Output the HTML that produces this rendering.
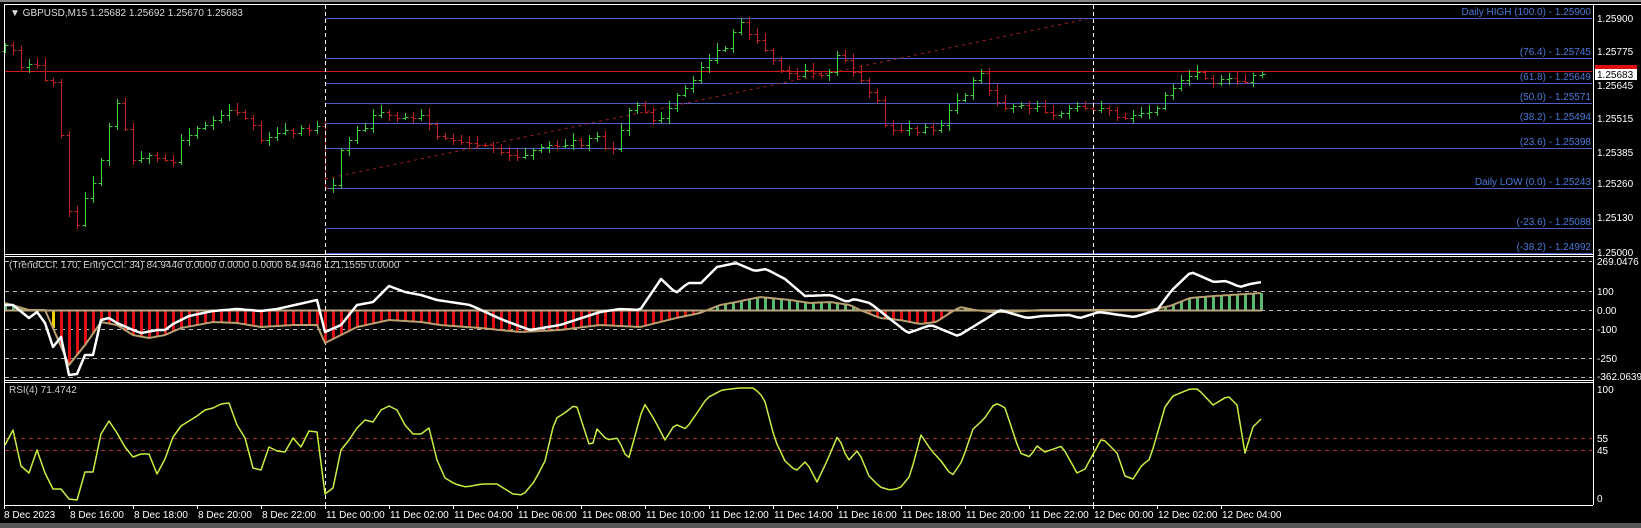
<!DOCTYPE html>
<html><head><meta charset="utf-8"><style>
html,body{margin:0;padding:0;background:#000;width:1641px;height:528px;overflow:hidden}
svg{display:block}
text{font-family:"Liberation Sans",sans-serif;font-size:10px}
</style></head><body>
<svg id="s" width="1641" height="528" viewBox="0 0 1641 528" xmlns="http://www.w3.org/2000/svg">
<rect width="1641" height="528" fill="#000"/>
<rect x="0" y="0" width="1641" height="2" fill="#888"/>
<rect x="0" y="523" width="1641" height="5" fill="#555"/>
<g id="g"></g>
<g stroke="#fff" fill="none" stroke-width="1">
<line x1="4.5" y1="4" x2="4.5" y2="505"/>
<line x1="4" y1="4.5" x2="1641" y2="4.5"/>
<line x1="1593.5" y1="4" x2="1593.5" y2="505"/>
<line x1="4" y1="254.5" x2="1593" y2="254.5"/>
<line x1="4" y1="256.5" x2="1593" y2="256.5"/>
<line x1="4" y1="380.5" x2="1593" y2="380.5"/>
<line x1="4" y1="382.5" x2="1593" y2="382.5"/>
<line x1="4" y1="505.5" x2="1593" y2="505.5"/>
</g>
<text x="10" y="16" fill="#ddd" font-size="10.5">▼ GBPUSD,M15  1.25682 1.25692 1.25670 1.25683</text>
<text x="9" y="268" fill="#ccc">(TrendCCI: 170, EntryCCI: 34)  84.9446 0.0000 0.0000 0.0000 84.9446 121.1555 0.0000</text>
<text x="9" y="393" fill="#ccc">RSI(4) 71.4742</text>
<g fill="#fff" font-size="10.5">
<text x="1597" y="22">1.25900</text>
<text x="1597" y="55">1.25775</text>
<text x="1597" y="89">1.25645</text>
<text x="1597" y="122">1.25515</text>
<text x="1597" y="156">1.25385</text>
<text x="1597" y="187">1.25260</text>
<text x="1597" y="221">1.25130</text>
<text x="1597" y="256">1.25000</text>
<text x="1597" y="265" font-size="9.5">269.0476</text>
<text x="1597" y="295">100</text>
<text x="1597" y="314">0.00</text>
<text x="1597" y="333">-100</text>
<text x="1597" y="362">-250</text>
<text x="1597" y="380" font-size="9.5">-362.0639</text>
<text x="1597" y="393">100</text>
<text x="1597" y="442">55</text>
<text x="1597" y="454">45</text>
<text x="1597" y="502">0</text>
</g>
<rect x="1595" y="65" width="42" height="6" fill="#e01010"/>
<rect x="1595" y="69" width="42" height="11" fill="#fff"/>
<text x="1597" y="78" fill="#000" font-size="10.5">1.25683</text>
</svg>
<script>
var g=document.getElementById('g');var h='';
function L(x1,y1,x2,y2,c,w,d){h+='<line x1="'+x1+'" y1="'+y1+'" x2="'+x2+'" y2="'+y2+'" stroke="'+c+'" stroke-width="'+(w||1)+'"'+(d?' stroke-dasharray="'+d+'"':'')+'/>';}
function T(x,y,t,c,a){h+='<text x="'+x+'" y="'+y+'" fill="'+c+'"'+(a?' text-anchor="end"':'')+'>'+t+'</text>';}
function interp(a,x){for(var i=0;i<a.length-1;i++){if(x<=a[i+1][0]){var t=(x-a[i][0])/(a[i+1][0]-a[i][0]);return a[i][1]+t*(a[i+1][1]-a[i][1]);}}return a[a.length-1][1];}
var fib=[[18,'Daily HIGH (100.0) -  1.25900'],[58,'(76.4) -  1.25745'],[83,'(61.8) -  1.25649'],[103,'(50.0) -  1.25571'],[123,'(38.2) -  1.25494'],[148,'(23.6) -  1.25398'],[188,'Daily LOW (0.0) -  1.25243'],[228,'(-23.6) -  1.25088'],[253,'(-38.2) -  1.24992']];
fib.forEach(function(f){L(325,f[0]+.5,1592,f[0]+.5,'#4d5fc0');T(1591,f[0]-3,f[1],'#4a78d8',1);});
L(5,71.5,1592,71.5,'#d01818');
L(325,179,1087,19,'#a02020',1,'3,4');
[261,291,310,329,358,377].forEach(function(y){L(5,y+.5,1592,y+.5,'#bbb',1,'4,4');});
L(5,438.5,1592,438.5,'#b03030',1,'4,4');L(5,450.5,1592,450.5,'#b03030',1,'4,4');
var C=[[5,45],[13,50],[21,67],[29,64],[37,65],[45,80],[53,82],[61,135],[69,211],[77,225],[85,198],[93,183],[101,160],[109,126],[117,103],[125,129],[133,160],[141,158],[149,155],[157,158],[165,160],[173,162],[181,140],[189,135],[197,128],[205,125],[213,120],[221,115],[229,110],[237,112],[245,118],[253,125],[261,140],[269,137],[277,133],[285,130],[293,133],[301,128],[309,130],[317,126],[325,188],[333,185],[341,150],[349,140],[357,130],[365,128],[373,115],[381,112],[389,115],[397,118],[405,117],[413,118],[421,115],[429,124],[437,136],[445,138],[453,140],[461,142],[469,143],[477,145],[485,145],[493,148],[501,152],[509,155],[517,157],[525,155],[533,150],[541,147],[549,145],[557,146],[565,145],[573,140],[581,145],[589,138],[597,136],[605,148],[613,149],[621,130],[629,110],[637,105],[645,112],[653,120],[661,118],[669,108],[677,95],[685,88],[693,80],[701,67],[709,60],[717,50],[725,48],[733,32],[741,22],[749,34],[757,40],[765,50],[773,60],[781,70],[789,73],[797,76],[805,70],[813,73],[821,75],[829,72],[837,55],[845,60],[853,72],[861,80],[869,92],[877,100],[885,125],[893,130],[901,130],[909,128],[917,132],[925,127],[933,130],[941,125],[949,110],[957,100],[965,95],[973,80],[981,73],[989,90],[997,102],[1005,108],[1013,106],[1021,105],[1029,108],[1037,106],[1045,112],[1053,115],[1061,113],[1069,108],[1077,106],[1085,108],[1093,110],[1101,108],[1109,110],[1117,117],[1125,118],[1133,115],[1141,113],[1149,112],[1157,108],[1165,95],[1173,88],[1181,80],[1189,76],[1197,72],[1205,78],[1213,83],[1221,79],[1229,78],[1237,81],[1245,82],[1253,75],[1262,74]];
var prev=C[0][1]+6;
for(var i=0;i<C.length;i++){var x=C[i][0]+.5,c=C[i][1],o=prev;var hi=Math.min(o,c)-(2+(i*7)%6),lo=Math.max(o,c)+(2+(i*3)%5);var col=c<o?'#3ad13a':'#c02020';L(x,hi,x,lo,col);L(x-3,o+.5,x,o+.5,col);L(x,c+.5,x+3,c+.5,col);prev=c;}
L(325.5,5,325.5,505,'#fff',1,'4,3');L(1093.5,5,1093.5,505,'#fff',1,'4,3');
var W=[[5,305],[13,305],[29,318],[37,312],[45,323],[53,347],[61,337],[69,375],[77,374],[85,355],[93,355],[101,320],[109,318],[117,323],[133,330],[141,333],[157,330],[165,330],[173,324],[189,316],[213,311],[237,309],[261,311],[277,309],[317,300],[325,332],[341,325],[357,305],[373,302],[389,286],[405,292],[421,295],[437,300],[470,305],[503,320],[530,330],[560,325],[600,312],[620,309],[640,310],[661,279],[676,293],[688,283],[701,283],[717,267],[736,263],[755,271],[766,269],[785,279],[805,296],[831,295],[847,302],[854,299],[870,303],[885,315],[908,333],[931,325],[958,336],[984,320],[1000,310],[1027,318],[1042,316],[1069,315],[1080,318],[1099,312],[1134,317],[1157,310],[1172,290],[1191,272],[1214,282],[1226,281],[1240,287],[1250,284],[1262,282]];
var TR=[[5,303],[29,310],[45,310],[53,328],[69,365],[85,345],[101,322],[117,325],[133,335],[149,338],[165,335],[181,328],[213,322],[237,323],[261,327],[293,325],[317,325],[325,343],[341,335],[357,327],[389,320],[421,322],[440,325],[480,328],[520,332],[560,330],[600,325],[640,327],[660,322],[676,318],[700,313],[720,305],[736,302],[760,297],[790,300],[810,303],[830,302],[850,305],[860,310],[880,318],[900,320],[920,324],[936,322],[950,313],[960,307],[975,310],[990,312],[1010,312],[1040,310],[1100,310],[1150,310],[1170,306],[1190,298],[1214,296],[1262,293]];
for(var x=5;x<=1262;x+=8){var v=interp(TR,x);var col=v>310.5?'#e01010':(v<309.5?'#5ab870':'#d8c020');if(x==53)col='#f0d000';h+='<rect x="'+(x-1)+'" y="'+Math.min(v,310)+'" width="3" height="'+Math.max(1,Math.abs(v-310))+'" fill="'+col+'"/>';}
function poly(a,c,w){var p=[];for(var x=5;x<=1262;x+=4)p.push(x+','+interp(a,x).toFixed(1));h+='<polyline points="'+p.join(' ')+'" fill="none" stroke="'+c+'" stroke-width="'+w+'" stroke-linejoin="round"/>';}
L(5,310.5,1262,310.5,'#b8a880',2);
poly(TR,'#b8a070',2);poly(W,'#fff',2.5);
var R=[[5,445],[13,430],[21,466],[29,473],[37,450],[45,473],[53,489],[61,489],[69,499],[77,500],[85,472],[93,472],[101,434],[109,421],[117,433],[125,447],[133,457],[141,454],[149,454],[157,474],[165,459],[173,437],[181,426],[189,421],[197,416],[205,410],[213,408],[221,404],[229,403],[237,425],[245,438],[253,468],[261,470],[269,447],[277,451],[285,452],[293,438],[301,447],[309,431],[317,432],[325,494],[333,488],[341,450],[349,440],[357,428],[365,420],[373,422],[381,410],[389,406],[397,410],[405,425],[413,434],[421,434],[429,428],[437,460],[445,478],[455,484],[466,487],[482,484],[497,484],[513,494],[523,495],[534,482],[545,461],[555,419],[566,412],[576,404],[591,450],[597,429],[607,440],[618,438],[628,461],[644,403],[654,419],[665,440],[675,424],[686,429],[697,413],[707,398],[722,390],[739,388],[754,388],[764,398],[775,440],[785,461],[796,471],[806,461],[817,482],[827,461],[838,435],[848,461],[858,450],[869,476],[880,487],[890,490],[900,488],[910,476],[921,435],[931,450],[941,461],[952,476],[962,461],[973,429],[984,419],[995,403],[1000,405],[1005,408],[1020,453],[1030,457],[1037,446],[1045,452],[1062,446],[1077,473],[1085,469],[1102,438],[1117,453],[1125,476],[1133,479],[1142,465],[1150,459],[1165,407],[1173,396],[1190,389],[1198,389],[1213,405],[1228,396],[1237,405],[1245,453],[1253,427],[1262,418]];
poly(R,'#c8f040',1.5);
var lab=['8 Dec 2023','8 Dec 16:00','8 Dec 18:00','8 Dec 20:00','8 Dec 22:00','11 Dec 00:00','11 Dec 02:00','11 Dec 04:00','11 Dec 06:00','11 Dec 08:00','11 Dec 10:00','11 Dec 12:00','11 Dec 14:00','11 Dec 16:00','11 Dec 18:00','11 Dec 20:00','11 Dec 22:00','12 Dec 00:00','12 Dec 02:00','12 Dec 04:00'];
lab.forEach(function(t,i){var x=(i==0?4:5+64*i);L(x+.5,505,x+.5,509,'#fff');T(x+(i==0?0:1),518,t,'#fff');});
g.innerHTML=h;
</script>
</body></html>
